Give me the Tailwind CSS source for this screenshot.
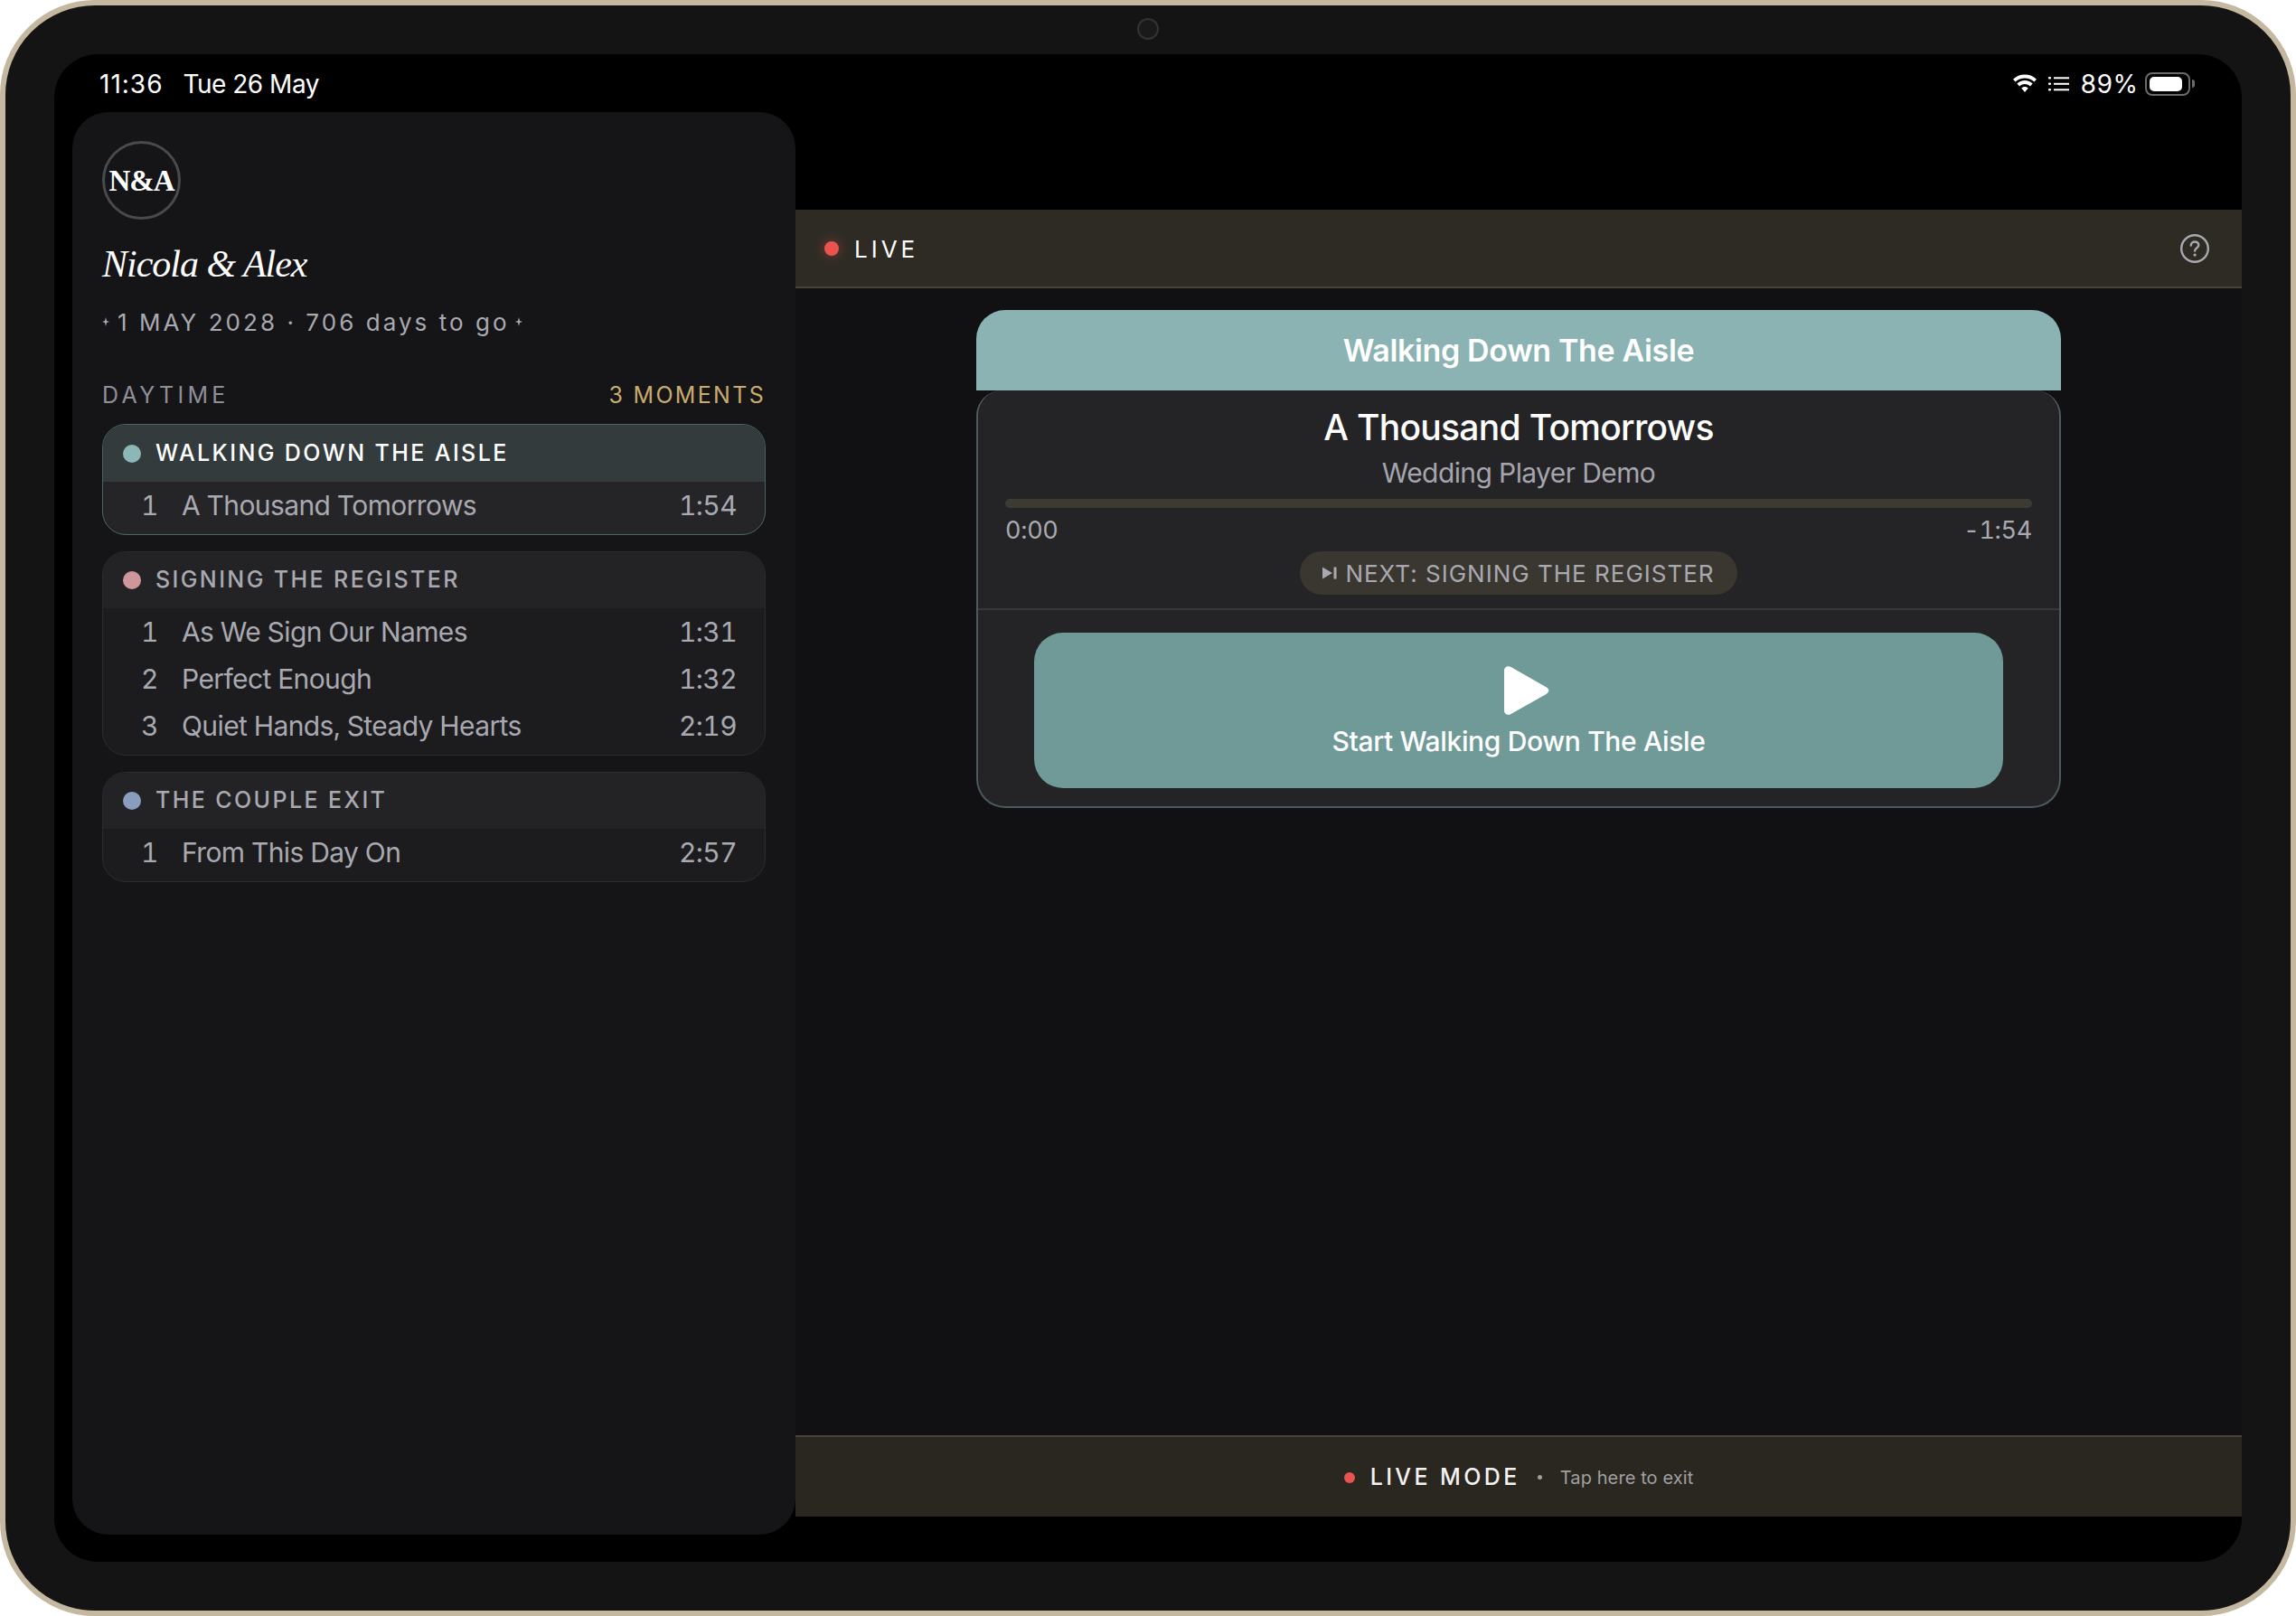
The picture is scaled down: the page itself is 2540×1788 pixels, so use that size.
<!DOCTYPE html>
<html lang="en">
<head>
  <meta charset="UTF-8" />
  <title>Wedding Player</title>
  <script src="https://cdn.jsdelivr.net/npm/@tailwindcss/browser@4"></script>
</head>
<body class="bg-white font-[family-name:Inter,sans-serif]">
  <div class="relative w-[2540px] h-[1788px] rounded-[105px] border-[6px] border-[#c4b8a0] bg-[#141414] p-[54px]">
    <!-- camera -->
    <div class="absolute left-[1252px] top-[14px] w-[24px] h-[24px] rounded-full bg-[#1a1a1a] border-2 border-[#333333]"></div>

    <div class="flex flex-col h-full rounded-[48px] bg-black overflow-hidden">
      <!-- status bar -->
      <div class="h-[64px] shrink-0 flex items-center justify-between pl-[50px] pr-[52px] pt-[1px] text-white text-[28px]">
        <div class="flex gap-[22px]"><span class="tracking-[1px]">11:36</span><span class="tracking-[-0.5px]">Tue 26 May</span></div>
        <div class="flex items-center">
          <svg class="w-[30px] h-[22px]" viewBox="0 0 30 22" fill="white"><path d="M15 4.5c4 0 7.6 1.5 10.4 4.1l2.6-2.9C24.5 2.3 20 .4 15 .4S5.500 2.300 2 5.700l2.600 2.900C7.400 6 11 4.500 15 4.500z"/><path d="M15 11c2.300 0 4.400.9 6 2.400l2.600-2.900C21.300 8.400 18.300 7.100 15 7.100s-6.300 1.300-8.600 3.400L9 13.400c1.600-1.500 3.700-2.400 6-2.400z"/><path d="M15 14c-1.500 0-2.800.6-3.800 1.500L15 20l3.800-4.500c-1-.9-2.300-1.500-3.800-1.500z"/></svg>
          <svg class="w-[23px] h-[18px] ml-[11px]" viewBox="0 0 23 18" fill="white"><rect x="0" y="1" width="3" height="2.500" rx="1"/><rect x="0" y="7.500" width="3" height="2.500" rx="1"/><rect x="0" y="14" width="3" height="2.500" rx="1"/><rect x="6" y="1.300" width="17" height="2"/><rect x="6" y="7.800" width="17" height="2"/><rect x="6" y="14.300" width="17" height="2"/></svg>
          <span class="ml-[12px] tabular-nums">89%</span>
          <div class="ml-[8px] w-[50px] h-[26px] rounded-[8px] border-2 border-[#6b6b6b] p-[3px]"><div class="w-[36px] h-full rounded-[5px] bg-white"></div></div>
          <div class="ml-[2px] w-[3px] h-[9px] rounded-r-full bg-[#6b6b6b]"></div>
        </div>
      </div>

      <div class="flex-1 flex pl-[20px] min-h-0">
        <!-- sidebar -->
        <aside class="w-[800px] shrink-0 mb-[30px] rounded-[40px] bg-[#151517] px-[33px] pt-[32px]">
          <div class="w-[87px] h-[87px] pt-[2px] rounded-full border-[3px] border-[#4a4a4c] flex items-center justify-center text-white text-[33px] font-bold font-[family-name:'Liberation_Serif',serif] tracking-[-1px]">N&amp;A</div>
          <h1 class="mt-[19px] h-[60px] leading-[60px] text-white text-[42px] italic font-[family-name:'Liberation_Serif',serif] tracking-[-1px]">Nicola &amp; Alex</h1>
          <div class="mt-[19px] h-[30px] flex items-center text-[#a9a9b1] text-[26px] tracking-[3.05px]">
            <svg class="w-[8px] h-[10px] mr-[9px]" viewBox="0 0 8 10" fill="#a9a9b1"><path d="M4 0l1 4 3 1-3 1-1 4-1-4-3-1 3-1z"/></svg>
            <span>1 MAY 2028 · 706 days to go</span>
            <svg class="w-[8px] h-[10px] ml-[6px]" viewBox="0 0 8 10" fill="#a9a9b1"><path d="M4 0l1 4 3 1-3 1-1 4-1-4-3-1 3-1z"/></svg>
          </div>
          <div class="mt-[52px] h-[30px] flex items-center justify-between text-[25px]">
            <span class="text-[#8f8f97] tracking-[4.3px]">DAYTIME</span>
            <span class="text-[#c9ab6f] tracking-[2.3px]">3 MOMENTS</span>
          </div>

          <div class="mt-[16px] flex flex-col gap-[18px]">
            <!-- active moment -->
            <section class="rounded-[26px] border-[1.5px] border-[#4d6467] bg-[#252527] overflow-hidden pb-[6px]">
              <div class="h-[63px] flex items-center gap-[16px] pl-[22px] bg-[#343b3d] text-white text-[25px] font-medium tracking-[2.4px]">
                <span class="w-[20px] h-[20px] rounded-full bg-[#8bb8b6]"></span>WALKING DOWN THE AISLE
              </div>
              <div class="h-[52px] flex items-center pl-[42px] pr-[31px] text-[#a9a9b1] text-[30px] tracking-[-0.6px] tabular-nums">
                <span class="w-[45px]">1</span><span class="flex-1">A Thousand Tomorrows</span><span>1:54</span>
              </div>
            </section>

            <section class="rounded-[26px] border border-[#2c2c2b] bg-[#1c1c1e] overflow-hidden pb-[6px]">
              <div class="h-[62px] flex items-center gap-[16px] pl-[22px] bg-[#232325] text-[#a9a9b1] text-[25px] font-medium tracking-[2.4px]">
                <span class="w-[20px] h-[20px] rounded-full bg-[#cf979c]"></span>SIGNING THE REGISTER
              </div>
              <div class="h-[52px] flex items-center pl-[42px] pr-[31px] text-[#a9a9b1] text-[30px] tracking-[-0.6px] tabular-nums">
                <span class="w-[45px]">1</span><span class="flex-1">As We Sign Our Names</span><span>1:31</span>
              </div>
              <div class="h-[52px] flex items-center pl-[42px] pr-[31px] text-[#a9a9b1] text-[30px] tracking-[-0.6px] tabular-nums">
                <span class="w-[45px]">2</span><span class="flex-1">Perfect Enough</span><span>1:32</span>
              </div>
              <div class="h-[52px] flex items-center pl-[42px] pr-[31px] text-[#a9a9b1] text-[30px] tracking-[-0.6px] tabular-nums">
                <span class="w-[45px]">3</span><span class="flex-1">Quiet Hands, Steady Hearts</span><span>2:19</span>
              </div>
            </section>

            <section class="rounded-[26px] border border-[#2c2c2b] bg-[#1c1c1e] overflow-hidden pb-[6px]">
              <div class="h-[62px] flex items-center gap-[16px] pl-[22px] bg-[#232325] text-[#a9a9b1] text-[25px] font-medium tracking-[2.4px]">
                <span class="w-[20px] h-[20px] rounded-full bg-[#8b9dbf]"></span>THE COUPLE EXIT
              </div>
              <div class="h-[52px] flex items-center pl-[42px] pr-[31px] text-[#a9a9b1] text-[30px] tracking-[-0.6px] tabular-nums">
                <span class="w-[45px]">1</span><span class="flex-1">From This Day On</span><span>2:57</span>
              </div>
            </section>
          </div>
        </aside>

        <!-- player column -->
        <div class="flex-1 flex flex-col pt-[108px] pb-[50px] min-w-0">
          <div class="h-[87px] shrink-0 flex items-center justify-between pl-[32px] pr-[36px] pt-[1px] bg-[#2e2b25] border-b-2 border-[#4a4436]">
            <div class="flex items-center gap-[17px] text-white text-[26px] tracking-[4px]">
              <span class="w-[16px] h-[16px] rounded-full bg-[#ea5450] shadow-[0_0_14px_rgba(234,84,80,0.45)]"></span>LIVE
            </div>
            <svg class="w-[32px] h-[32px]" viewBox="0 0 32 32" fill="none"><circle cx="16" cy="16" r="14.800" stroke="#a9a9b1" stroke-width="2.400"/><path d="M11.800 12.600c0-2.500 1.900-4.100 4.300-4.100s4.200 1.500 4.200 3.700c0 3.200-4.200 3.300-4.200 6.300" stroke="#a9a9b1" stroke-width="2.400" stroke-linecap="round"/><circle cx="16.100" cy="23.100" r="1.600" fill="#a9a9b1"/></svg>
          </div>

          <main class="flex-1 bg-[#111113] pt-[24px] min-h-0">
            <div class="w-[1200px] mx-auto">
              <div class="h-[89px] rounded-t-[32px] bg-[#8bb3b3] flex items-center justify-center text-white text-[34px] font-semibold tracking-[-0.35px]">Walking Down The Aisle</div>
              <div class="h-[462px] rounded-[32px] rounded-t-[28px] border-x-2 border-b-2 border-[#4a5a5e] bg-[#242426]">
                <div class="h-[243px] border-b-2 border-[#38383a] px-[30px] flex flex-col items-center">
                  <div class="h-[50px] mt-[16px] leading-[50px] text-white text-[39px] font-medium tracking-[-0.7px]">A Thousand Tomorrows</div>
                  <div class="h-[40px] mt-[5px] leading-[40px] text-[#a5a5ad] text-[30px] tracking-[-0.6px]">Wedding Player Demo</div>
                  <div class="w-full h-[10px] mt-[9px] rounded-full bg-[#3d3a34]"></div>
                  <div class="w-full flex justify-between mt-[8px] h-[34px] leading-[34px] text-[#a9a9b1] text-[27px] tracking-[-0.3px] tabular-nums"><span>0:00</span><span>-1:54</span></div>
                  <div class="mt-[6px] h-[48px] w-[484px] rounded-full bg-[#3a3731] flex items-center justify-center gap-[9px] text-[#a9a9b1] text-[26px] tracking-[1px]">
                    <svg class="w-[16px] h-[14px]" viewBox="0 0 16 14" fill="#a9a9b1"><path d="M0 0.500l11 6.500-11 6.500z"/><rect x="12.500" y="0.500" width="3" height="13"/></svg>
                    <span>NEXT: SIGNING THE REGISTER</span>
                  </div>
                </div>
                <div class="px-[62px] pt-[25px]">
                  <button class="w-full h-[172px] rounded-[32px] bg-[#709a98] flex flex-col items-center text-white text-[30px] font-medium tracking-[-0.35px]">
                    <svg class="mt-[37px] w-[50px] h-[54px] ml-[17px]" viewBox="0 0 50 54" fill="white"><path d="M0 5C0 1 4-1.200 7.500 1L46.500 23.200c3.800 2.200 3.800 5.500 0 7.700L7.500 53C4 55.200 0 53 0 49z"/></svg>
                    <span class="mt-[10px] leading-[38px]">Start Walking Down The Aisle</span>
                  </button>
                </div>
              </div>
            </div>
          </main>

          <div class="h-[90px] shrink-0 pt-[1px] flex items-center justify-center bg-[#2a2721] border-t-2 border-[#4a4436]">
            <span class="w-[12px] h-[12px] rounded-full bg-[#ea5450]"></span>
            <span class="ml-[17px] text-[#f2f2f2] text-[25px] font-medium tracking-[3.4px]">LIVE MODE</span>
            <span class="ml-[19px] w-[5px] h-[5px] rounded-full bg-[#a0a0a0]"></span>
            <span class="ml-[20px] text-[#a0a0a0] text-[20px] tracking-[0.1px]">Tap here to exit</span>
          </div>
        </div>
      </div>
    </div>
  </div>
</body>
</html>
